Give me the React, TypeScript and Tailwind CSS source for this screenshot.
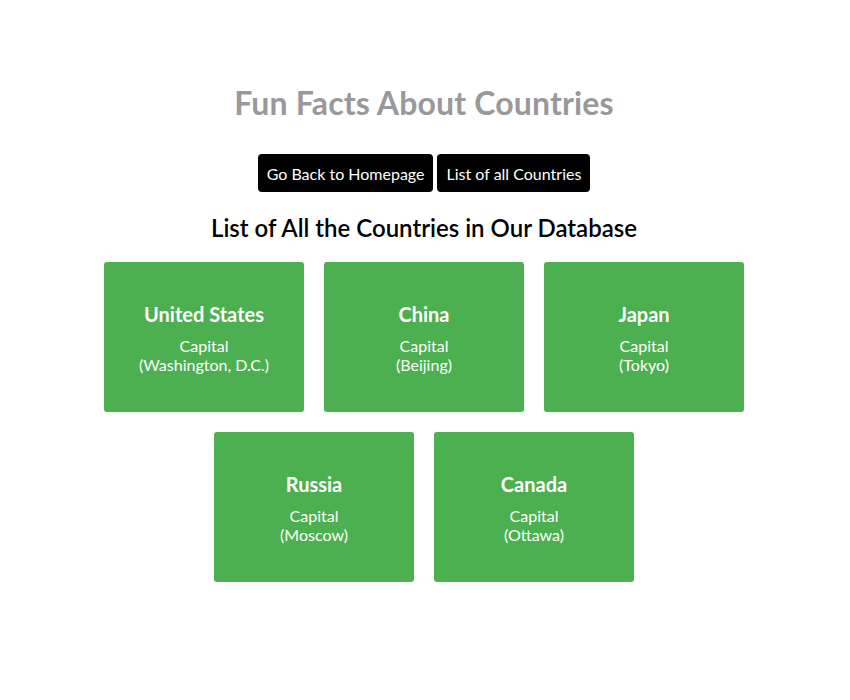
import React from 'react'

const countries = [
  { name: 'United States', capital: 'Washington, D.C.' },
  { name: 'China', capital: 'Beijing' },
  { name: 'Japan', capital: 'Tokyo' },
  { name: 'Russia', capital: 'Moscow' },
  { name: 'Canada', capital: 'Ottawa' },
];

function CountryCard(props: { name: string; capital: string }) {
  return (
    <div className="w-[200px] h-[150px] bg-[#4caf50] rounded-[3px] flex flex-col items-center pt-[40px] text-white text-center">
      <div className="text-[20px] font-bold leading-[24px] mb-[10px]">{props.name}</div>
      <div className="text-[16px] leading-[19px]">Capital</div>
      <div className="text-[16px] leading-[19px]">({props.capital})</div>
    </div>
  )
}

export default function App() {
  return (
    <div className="min-h-[700px] bg-white flex flex-col items-center pt-[84px] pr-[2px] font-['Lato',sans-serif]">
      <h1 className="text-[32px] font-bold leading-[38px] text-[#999999] tracking-[0.15px]">Fun Facts About Countries</h1>
      <div className="flex gap-[4px] mt-[32px]">
        <button className="h-[38px] pl-[9px] pr-[8px] pt-[2px] bg-black text-white text-[16px] rounded-[4px]">Go Back to Homepage</button>
        <button className="h-[38px] pl-[10px] pr-[9px] pt-[2px] bg-black text-white text-[16px] rounded-[4px]">List of all Countries</button>
      </div>
      <h2 className="text-[24px] font-semibold leading-[29px] text-black mt-[21px]">List of All the Countries in Our Database</h2>
      <div className="flex flex-wrap justify-center gap-[20px] w-[640px] mt-[20px]">
        {countries.map((c) => <CountryCard key={c.name} {...c} />)}
      </div>
    </div>
  );
}
